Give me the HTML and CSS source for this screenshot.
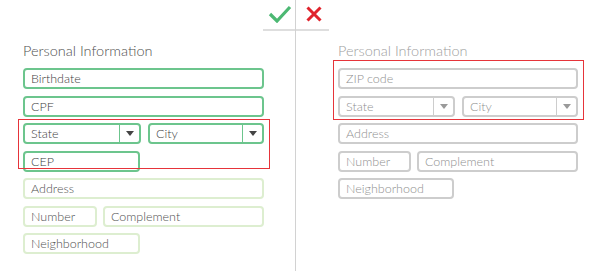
FILE: index.html
```html
<!DOCTYPE html>
<html lang="en">
<head>
    <meta charset="UTF-8">
    <meta name="viewport" content="width=device-width, initial-scale=1.0">
    <title>Personal Information - do / don't</title>
    <link rel="stylesheet" href="styles.css">
</head>
<body>
    <div class="compare">
        <!-- Do -->
        <div class="side side-do">
            <div class="mark">
                <svg width="24" height="18" viewBox="0 0 24 18">
                    <path d="M2 9 L9 16 L22 2" fill="none" stroke="#4cb873" stroke-width="3.2"/>
                </svg>
            </div>
            <h2 class="title">Personal Information</h2>
            <div class="form">
                <div class="field strong">Birthdate</div>
                <div class="field strong">CPF</div>
                <div class="row">
                    <div class="field strong select w118"><span>State</span><i class="arrow"></i></div>
                    <div class="field strong select grow"><span>City</span><i class="arrow"></i></div>
                </div>
                <div class="field strong w117">CEP</div>
                <div class="field light">Address</div>
                <div class="row narrow">
                    <div class="field light w74">Number</div>
                    <div class="field light grow">Complement</div>
                </div>
                <div class="field light w117">Neighborhood</div>
            </div>
            <div class="highlight hl-do"></div>
        </div>

        <!-- Don't -->
        <div class="side side-dont">
            <div class="mark">
                <svg width="18" height="18" viewBox="0 0 18 18">
                    <path d="M2.5 2.5 L15.5 15.5 M15.5 2.5 L2.5 15.5" fill="none" stroke="#e0232c" stroke-width="3"/>
                </svg>
            </div>
            <h2 class="title">Personal Information</h2>
            <div class="form">
                <div class="field gray">ZIP code</div>
                <div class="row">
                    <div class="field gray select w117"><span>State</span><i class="arrow"></i></div>
                    <div class="field gray select grow"><span>City</span><i class="arrow"></i></div>
                </div>
                <div class="field gray">Address</div>
                <div class="row narrow">
                    <div class="field gray w73">Number</div>
                    <div class="field gray grow">Complement</div>
                </div>
                <div class="field gray w116">Neighborhood</div>
            </div>
            <div class="highlight hl-dont"></div>
        </div>
    </div>
</body>
</html>
```

FILE: styles.css
```css
body {
    margin: 0;
    background: #fff;
    font-family: 'Lato', 'Open Sans', sans-serif;
    font-weight: 300;
    color: #555;
}

.compare {
    display: flex;
    height: 271px;
}

.side {
    position: relative;
    box-sizing: border-box;
}

.side-do {
    width: 296px;
    padding-left: 23px;
    border-right: 1px solid #d2d2d2;
}

.side-dont {
    flex: 1;
    padding-left: 42px;
}

.mark {
    width: 32px;
    height: 31px;
    border-bottom: 2px solid #dedede;
    display: flex;
    align-items: center;
    justify-content: center;
    box-sizing: border-box;
    padding-bottom: 1px;
}

.side-do .mark {
    margin-left: auto;
    justify-content: flex-start;
    padding-left: 5px;
}

.side-dont .mark {
    margin-left: -42px;
    width: 33px;
    justify-content: flex-start;
    padding-left: 9px;
}

.title {
    margin: 11px 0 0;
    height: 26px;
    font-size: 14.5px;
    font-weight: 300;
    color: #4f4f4f;
    line-height: 17px;
}

.side-dont .title {
    color: #a0a0a0;
}

.form {
    width: 241px;
    display: flex;
    flex-direction: column;
    gap: 6.5px;
}

.side-dont .form {
    width: 240px;
}

.row {
    display: flex;
    gap: 7px;
}

.row.narrow {
    gap: 6px;
}

.field {
    box-sizing: border-box;
    height: 21px;
    border-radius: 4px;
    padding: 0 6px;
    font-size: 12.5px;
    line-height: 17px;
    display: flex;
    align-items: center;
}

.field.strong {
    border: 2px solid #6cc58d;
    color: #404040;
}

.field.light {
    border: 2px solid #ddeed0;
    color: #505050;
}

.field.gray {
    border: 2px solid #cdcdcd;
    color: #8f8f8f;
}

.w118 { width: 118px; }
.w117 { width: 117px; }
.w116 { width: 116px; }
.w74 { width: 74px; }
.w73 { width: 73px; }
.grow { flex: 1; }

.select {
    padding-right: 0;
}

.select span {
    flex: 1;
}

.arrow {
    width: 19px;
    height: 100%;
    border-left: 1px solid currentColor;
    display: flex;
    align-items: center;
    justify-content: center;
}

.strong .arrow {
    border-left-color: #6cc58d;
}

.gray .arrow {
    border-left-color: #cdcdcd;
}

.arrow::after {
    content: "";
    border-left: 4px solid transparent;
    border-right: 4px solid transparent;
    border-top: 5px solid #444;
}

.gray .arrow::after {
    border-top-color: #9a9a9a;
}

.highlight {
    position: absolute;
    border: 1px solid #e6343a;
    pointer-events: none;
}

.hl-do {
    left: 18px;
    top: 119px;
    width: 252px;
    height: 50px;
    box-sizing: border-box;
}

.hl-dont {
    left: 37px;
    top: 60px;
    width: 251px;
    height: 60px;
    box-sizing: border-box;
}
```
